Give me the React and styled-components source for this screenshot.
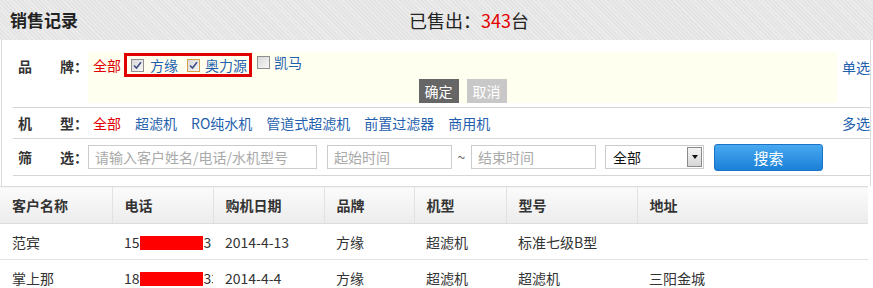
import React from 'react';
import styled, { createGlobalStyle } from 'styled-components';

const GlobalStyle = createGlobalStyle`
  html, body {
    margin: 0;
    padding: 0;
    background: #ffffff;
  }
  body {
    font-family: "Noto Sans CJK SC", "Noto Sans", "Liberation Sans", sans-serif;
    font-size: 14px;
    color: #333;
  }
`;

const Page = styled.div`
  width: 873px;
  overflow: hidden;
`;

const TopBar = styled.div`
  height: 40px;
  display: grid;
  grid-template-columns: 399px 1fr;
  align-items: center;
  padding-left: 10px;
  background-color: #e4e4e4;
  background-image: repeating-linear-gradient(45deg, rgba(255, 255, 255, 0.35) 0 1px, transparent 1px 3px);
`;

const Title = styled.div`
  font-size: 17px;
  font-weight: bold;
  color: #222;
  line-height: 20px;
`;

const SoldCount = styled.div`
  font-size: 18px;
  color: #222;
  line-height: 22px;
`;

const Num = styled.span`
  color: #e60000;
`;

const FilterPanel = styled.div`
  margin-left: 1px;
  width: 870px;
  box-sizing: border-box;
  border-left: 1px solid #dcdcdc;
  border-right: 1px solid #dcdcdc;
  padding: 1px 0 10px 11px;
`;

const Row = styled.div`
  display: flex;
  align-items: ${p => (p.$top ? 'flex-start' : 'center')};
  height: ${p => p.$h}px;
  box-sizing: border-box;
  padding-top: ${p => p.$pt || 0}px;
  border-bottom: 1px solid #d6d6d6;
`;

const Label = styled.div`
  flex-shrink: 0;
  width: 75px;
  box-sizing: border-box;
  padding-left: 5px;
  display: flex;
  align-items: center;
  font-weight: bold;
  color: #333;
  white-space: nowrap;
  margin-top: ${p => p.$mt || 0}px;
  line-height: 20px;
`;

const LabelChars = styled.span`
  width: 58px;
  display: flex;
  justify-content: space-between;
  padding-right: 0;
`;

const Highlight = styled.div`
  width: 749px;
  height: 51px;
  box-sizing: border-box;
  flex-shrink: 0;
  background: #fffff0;
  padding: 1px 5px 0;
  display: flex;
  flex-direction: column;
`;

const OptionLine = styled.div`
  height: 26px;
  display: flex;
  align-items: flex-start;
`;

const OptionText = styled.span`
  color: ${p => (p.$active ? '#e00000' : '#1f5fae')};
  line-height: 24px;
  white-space: nowrap;
  margin-right: ${p => p.$mr || 0}px;
`;

const Marked = styled.span`
  display: inline-flex;
  align-items: center;
  height: 24px;
  box-sizing: border-box;
  border: 3px solid #e00000;
  padding: 0 2px 0 4px;
  margin-left: 3px;
  margin-right: 5px;
`;

const CheckItem = styled.span`
  display: inline-flex;
  align-items: center;
  height: 18px;
  margin-right: ${p => p.$mr || 0}px;
`;

const Box = styled.span`
  width: 13px;
  height: 13px;
  box-sizing: border-box;
  border: 1px solid ${p => (p.$hover ? '#d9a04a' : '#8f8f8f')};
  background: linear-gradient(135deg, #d8d8d8 0%, #f7f7f7 100%);
  display: inline-flex;
  align-items: center;
  justify-content: center;
  margin-right: ${p => p.$gap}px;
`;

const ButtonRow = styled.div`
  height: 24px;
  display: flex;
  justify-content: center;
  gap: 8px;
`;

const SmallButton = styled.span`
  width: 40px;
  height: 24px;
  display: flex;
  align-items: center;
  justify-content: center;
  color: #fff;
  background: ${p => (p.$primary ? '#666666' : '#c8c8c8')};
  font-size: 14px;
  cursor: pointer;
`;

const SideLink = styled.span`
  color: #1f5fae;
  margin-left: auto;
  white-space: nowrap;
  line-height: 20px;
  margin-top: ${p => p.$mt || 0}px;
`;

const TypeList = styled.div`
  display: flex;
  gap: 14px;
  padding-left: 5px;
  line-height: 20px;
`;

const TypeLink = styled.span`
  color: ${p => (p.$active ? '#e00000' : '#1f5fae')};
  white-space: nowrap;
`;

const Input = styled.div`
  width: ${p => p.$w}px;
  height: 24px;
  box-sizing: border-box;
  border: 1px solid #cccccc;
  padding-left: 6px;
  display: flex;
  align-items: center;
  color: #a9a9a9;
  white-space: nowrap;
  overflow: hidden;
  flex-shrink: 0;
  margin-right: ${p => p.$mr || 0}px;
`;

const Tilde = styled.span`
  width: 19px;
  color: #666;
  text-align: center;
  flex-shrink: 0;
`;

const Select = styled.div`
  width: 99px;
  height: 24px;
  box-sizing: border-box;
  border: 1px solid #cccccc;
  display: flex;
  align-items: center;
  justify-content: space-between;
  padding: 0 1px 0 7px;
  color: #111;
  margin-right: 10px;
  flex-shrink: 0;
`;

const SelectArrow = styled.span`
  width: 15px;
  height: 20px;
  box-sizing: border-box;
  border: 1px solid #8a8a8a;
  background: linear-gradient(#f4f4f4, #d6d6d6);
  display: flex;
  align-items: center;
  justify-content: center;

  &::after {
    content: '';
    border-left: 3px solid transparent;
    border-right: 3px solid transparent;
    border-top: 4px solid #111;
  }
`;

const SearchButton = styled.div`
  width: 109px;
  height: 27px;
  box-sizing: border-box;
  border: 1px solid #1b73c6;
  border-radius: 3px;
  background: linear-gradient(#48a8f0, #1b80d8);
  color: #fff;
  font-size: 15px;
  display: flex;
  align-items: center;
  justify-content: center;
  flex-shrink: 0;
`;

const Table = styled.table`
  width: 868px;
  border-collapse: collapse;
  table-layout: fixed;
`;

const Th = styled.th`
  height: 36px;
  padding: 0 0 0 12px;
  text-align: left;
  font-weight: bold;
  color: #333;
  font-size: 14px;
  background: linear-gradient(#fbfbfb, #ececec);
  border-top: 1px solid #dddddd;
  border-bottom: 1px solid #dddddd;
  border-left: 1px solid #e2e2e2;

  &:first-child {
    border-left: none;
  }
`;

const Td = styled.td`
  height: 35px;
  padding: 0 0 0 12px;
  color: #333;
  font-size: 14px;
  border-bottom: 1px solid #e2e2e2;
  white-space: nowrap;
  overflow: hidden;
`;

const Masked = styled.span`
  display: inline-block;
  width: 63px;
  height: 14px;
  background: #ff0000;
  vertical-align: -2px;
  margin: 0 1px 0 0;
`;

const Check = () => (
  <svg width="9" height="9" viewBox="0 0 9 9">
    <path d="M1 4.5 L3.5 7 L8 1.2" fill="none" stroke="#3f4f86" strokeWidth="1.6" />
  </svg>
);

const columns = [
  { title: '客户名称', width: 112 },
  { title: '电话', width: 101 },
  { title: '购机日期', width: 111 },
  { title: '品牌', width: 90 },
  { title: '机型', width: 92 },
  { title: '型号', width: 131 },
  { title: '地址', width: 231 },
];

const rows = [
  { name: '范宾', pre: '15', post: '3', date: '2014-4-13', brand: '方缘', type: '超滤机', model: '标准七级B型', addr: '' },
  { name: '掌上那', pre: '18', post: '33', date: '2014-4-4', brand: '方缘', type: '超滤机', model: '超滤机', addr: '三阳金城' },
];

const types = ['超滤机', 'RO纯水机', '管道式超滤机', '前置过滤器', '商用机'];

export default function App() {
  return (
    <Page>
      <GlobalStyle />
      <TopBar>
        <Title>销售记录</Title>
        <SoldCount>
          已售出：<Num>343</Num>台
        </SoldCount>
      </TopBar>

      <FilterPanel>
        <Row $h={67} $pt={11} $top>
          <Label $mt={4}>
            <LabelChars><span>品</span><span>牌</span></LabelChars>：
          </Label>
          <Highlight>
            <OptionLine>
              <OptionText $active>全部</OptionText>
              <Marked>
                <CheckItem $mr={9}>
                  <Box $gap={6}><Check /></Box>
                  <OptionText>方缘</OptionText>
                </CheckItem>
                <CheckItem>
                  <Box $gap={5} $hover><Check /></Box>
                  <OptionText>奥力源</OptionText>
                </CheckItem>
              </Marked>
              <CheckItem>
                <Box $gap={4} />
                <OptionText>凯马</OptionText>
              </CheckItem>
            </OptionLine>
            <ButtonRow>
              <SmallButton $primary>确定</SmallButton>
              <SmallButton>取消</SmallButton>
            </ButtonRow>
          </Highlight>
          <SideLink $mt={5}>单选</SideLink>
        </Row>

        <Row $h={31}>
          <Label>
            <LabelChars><span>机</span><span>型</span></LabelChars>：
          </Label>
          <TypeList>
            <TypeLink $active>全部</TypeLink>
            {types.map(t => (
              <TypeLink key={t}>{t}</TypeLink>
            ))}
          </TypeList>
          <SideLink>多选</SideLink>
        </Row>

        <Row $h={37}>
          <Label>
            <LabelChars><span>筛</span><span>选</span></LabelChars>：
          </Label>
          <Input $w={229} $mr={10}>请输入客户姓名/电话/水机型号</Input>
          <Input $w={125}>起始时间</Input>
          <Tilde>~</Tilde>
          <Input $w={125} $mr={9}>结束时间</Input>
          <Select>
            全部
            <SelectArrow />
          </Select>
          <SearchButton>搜索</SearchButton>
        </Row>
      </FilterPanel>

      <Table>
        <colgroup>
          {columns.map(c => (
            <col key={c.title} style={{ width: c.width }} />
          ))}
        </colgroup>
        <thead>
          <tr>
            {columns.map(c => (
              <Th key={c.title}>{c.title}</Th>
            ))}
          </tr>
        </thead>
        <tbody>
          {rows.map(r => (
            <tr key={r.name}>
              <Td>{r.name}</Td>
              <Td>
                {r.pre}
                <Masked />
                {r.post}
              </Td>
              <Td>{r.date}</Td>
              <Td>{r.brand}</Td>
              <Td>{r.type}</Td>
              <Td>{r.model}</Td>
              <Td>{r.addr}</Td>
            </tr>
          ))}
        </tbody>
      </Table>
    </Page>
  );
}
